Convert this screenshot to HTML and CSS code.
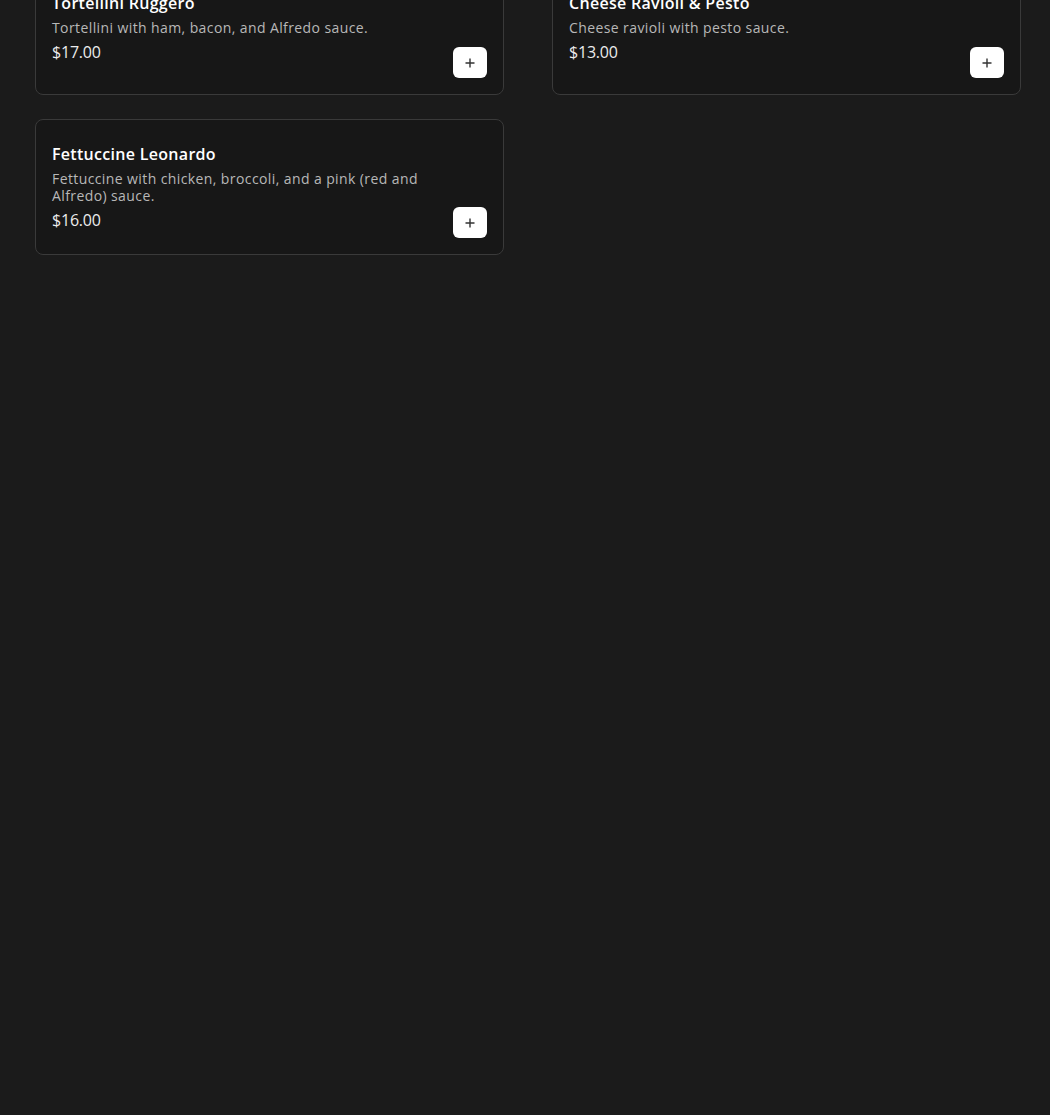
FILE: index.html
```html
<!DOCTYPE html>
<html lang="en">
<head>
  <meta charset="UTF-8">
  <meta name="viewport" content="width=device-width, initial-scale=1.0">
  <title>Menu - Pasta</title>
  <link rel="stylesheet" href="styles.css">
</head>
<body>
  <div class="menu-grid">
    <div class="menu-card">
      <div class="item-info">
        <div class="item-name">Tortellini Ruggero</div>
        <div class="item-desc">Tortellini with ham, bacon, and Alfredo sauce.</div>
        <div class="item-price">$17.00</div>
      </div>
      <button class="add-btn" aria-label="Add"><svg width="10" height="10" viewBox="0 0 10 10"><path d="M5 0.5v9M0.5 5h9" stroke="#333" stroke-width="1.4"/></svg></button>
    </div>
    <div class="menu-card">
      <div class="item-info">
        <div class="item-name">Cheese Ravioli &amp; Pesto</div>
        <div class="item-desc">Cheese ravioli with pesto sauce.</div>
        <div class="item-price">$13.00</div>
      </div>
      <button class="add-btn" aria-label="Add"><svg width="10" height="10" viewBox="0 0 10 10"><path d="M5 0.5v9M0.5 5h9" stroke="#333" stroke-width="1.4"/></svg></button>
    </div>
    <div class="menu-card">
      <div class="item-info">
        <div class="item-name">Fettuccine Leonardo</div>
        <div class="item-desc">Fettuccine with chicken, broccoli, and a pink (red and Alfredo) sauce.</div>
        <div class="item-price">$16.00</div>
      </div>
      <button class="add-btn" aria-label="Add"><svg width="10" height="10" viewBox="0 0 10 10"><path d="M5 0.5v9M0.5 5h9" stroke="#333" stroke-width="1.4"/></svg></button>
    </div>
  </div>
</body>
</html>
```

FILE: styles.css
```css
body {
  background-color: #1b1b1b;
  color: white;
  font-family: "Open Sans", Arial, sans-serif;
  margin: 0;
  padding: 0;
}
.menu-grid {
  display: grid;
  grid-template-columns: 1fr 1fr;
  column-gap: 48px;
  row-gap: 24px;
  margin-top: -41px;
  padding: 0 29px 0 35px;
}
.menu-card {
  display: flex;
  justify-content: space-between;
  gap: 12px;
  min-height: 102px;
  padding: 16px;
  background-color: #171717;
  border: 1px solid #3a3a3a;
  border-radius: 8px;
}
.item-info {
  display: flex;
  flex-direction: column;
  justify-content: center;
  max-width: 390px;
}
.item-name {
  font-size: 16px;
  font-weight: 600;
  line-height: 24px;
  letter-spacing: 0.3px;
  margin-bottom: 4px;
}
.item-desc {
  font-size: 14px;
  line-height: 17px;
  letter-spacing: 0.4px;
  color: #b8b8b8;
  margin-bottom: 4px;
}
.item-price {
  font-size: 16px;
  line-height: 24px;
  letter-spacing: -0.2px;
  color: #ececec;
}
.add-btn {
  align-self: flex-end;
  flex-shrink: 0;
  width: 34px;
  height: 31px;
  display: flex;
  align-items: center;
  justify-content: center;
  background-color: white;
  border: none;
  border-radius: 6px;
  padding: 0;
  cursor: pointer;
}
```
